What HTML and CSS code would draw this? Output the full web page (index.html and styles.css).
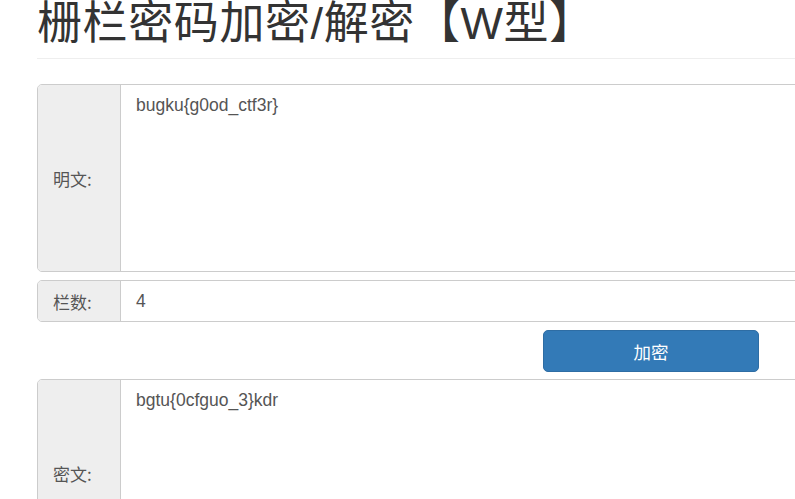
FILE: index.html
```html
<!DOCTYPE html>
<html lang="zh-CN">
<head>
<meta charset="utf-8">
<title>栅栏密码加密/解密【W型】</title>
<link rel="stylesheet" href="styles.css">
</head>
<body>
<div class="container">
  <div class="page-header">
    <h1 class="title">栅栏密码加密/解密【W型】</h1>
  </div>
  <div class="input-group tall">
    <span class="addon">明文:</span>
    <div class="field area">bugku{g0od_ctf3r}</div>
  </div>
  <div class="input-group short">
    <span class="addon">栏数:</span>
    <div class="field">4</div>
  </div>
  <div class="actions">
    <button class="btn-primary">加密</button>
  </div>
  <div class="input-group tall">
    <span class="addon">密文:</span>
    <div class="field area">bgtu{0cfguo_3}kdr</div>
  </div>
</div>
</body>
</html>
```
FILE: styles.css
```css
html, body {
  margin: 0;
  padding: 0;
  background: #fff;
  overflow: hidden;
}
body {
  font-family: "Liberation Sans", Arial, "Noto Sans CJK SC", sans-serif;
  font-size: 17.5px;
  color: #333;
}
.container {
  margin-left: 37px;
  width: 900px;
}
.page-header {
  border-bottom: 1px solid #eee;
  padding-bottom: 10px;
  margin-bottom: 25px;
}
.title {
  margin: 0;
  font-family: "Liberation Sans", Arial, "Noto Sans CJK SC", sans-serif;
  font-weight: 400;
  font-size: 45px;
  line-height: 48px;
  letter-spacing: 0.6px;
  color: #333;
}
.input-group {
  display: flex;
  box-sizing: border-box;
  border: 1px solid #ccc;
  border-radius: 5px;
  overflow: hidden;
  margin-bottom: 8px;
}
.input-group.tall { height: 188px; }
.input-group.short { height: 42px; }
.addon {
  width: 83px;
  flex: none;
  box-sizing: border-box;
  padding: 0 15px;
  background: #eee;
  border-right: 1px solid #ccc;
  color: #555;
  display: flex;
  align-items: center;
  font-family: "Noto Sans CJK SC", sans-serif;
  font-size: 17px;
}
.field {
  flex: 1;
  padding: 8px 15px;
  color: #555;
  line-height: 25px;
  font-size: 17.5px;
}
.short .field {
  display: flex;
  align-items: center;
  padding-top: 0;
  padding-bottom: 0;
}
.actions {
  display: flex;
  padding-left: 506px;
  margin-bottom: 7px;
}
.btn-primary {
  width: 216px;
  height: 42px;
  background: #337ab7;
  border: 1px solid #2e6da4;
  border-radius: 5px;
  color: #fff;
  font-family: "Noto Sans CJK SC", sans-serif;
  font-size: 17.5px;
  padding: 0;
}
```
